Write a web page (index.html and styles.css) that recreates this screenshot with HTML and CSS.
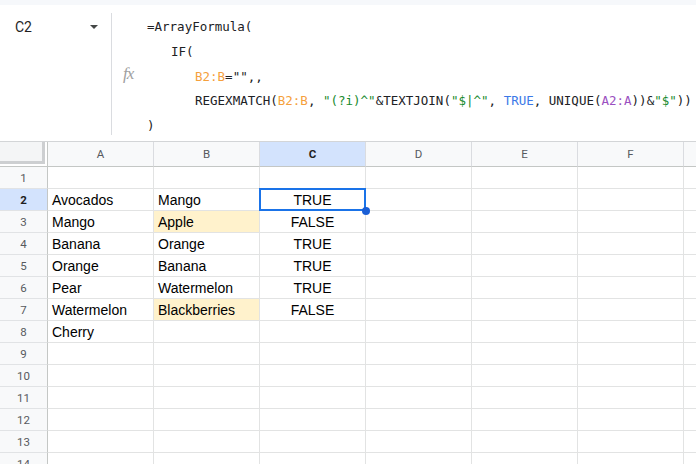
FILE: index.html
```html
<!DOCTYPE html>
<html>
<head>
<meta charset="utf-8">
<link rel="stylesheet" href="styles.css">
</head>
<body>
<div class="top"></div>
<div class="fbar">
  <div class="namebox"><span class="ref">C2</span><span class="caret"></span></div>
  <div class="sep"></div>
  <div class="fx">fx</div>
  <div class="formula">
    <div class="ln">=ArrayFormula(</div>
    <div class="ln i1">IF(</div>
    <div class="ln i2"><span class="rng">B2:B</span>="",,</div>
    <div class="ln i2">REGEXMATCH(<span class="rng">B2:B</span>, <span class="str">"(?i)^"</span>&amp;TEXTJOIN(<span class="str">"$|^"</span>, <span class="bool">TRUE</span>, UNIQUE(<span class="rng2">A2:A</span>))&amp;<span class="str">"$"</span>))</div>
    <div class="ln">)</div>
  </div>
</div>
<div class="grid">
  <div class="corner"><div class="cornerin"></div></div>
  <div class="ch">A</div><div class="ch">B</div><div class="ch sel">C</div><div class="ch">D</div><div class="ch">E</div><div class="ch">F</div><div class="ch"></div>

  <div class="rh">1</div><div class="c"></div><div class="c"></div><div class="c"></div><div class="c"></div><div class="c"></div><div class="c"></div><div class="c"></div>

  <div class="rh sel">2</div><div class="c">Avocados</div><div class="c">Mango</div><div class="c ctr active">TRUE<span class="selbox"></span><span class="handle"></span></div><div class="c"></div><div class="c"></div><div class="c"></div><div class="c"></div>

  <div class="rh">3</div><div class="c">Mango</div><div class="c hl">Apple</div><div class="c ctr">FALSE</div><div class="c"></div><div class="c"></div><div class="c"></div><div class="c"></div>

  <div class="rh">4</div><div class="c">Banana</div><div class="c">Orange</div><div class="c ctr">TRUE</div><div class="c"></div><div class="c"></div><div class="c"></div><div class="c"></div>

  <div class="rh">5</div><div class="c">Orange</div><div class="c">Banana</div><div class="c ctr">TRUE</div><div class="c"></div><div class="c"></div><div class="c"></div><div class="c"></div>

  <div class="rh">6</div><div class="c">Pear</div><div class="c">Watermelon</div><div class="c ctr">TRUE</div><div class="c"></div><div class="c"></div><div class="c"></div><div class="c"></div>

  <div class="rh">7</div><div class="c">Watermelon</div><div class="c hl">Blackberries</div><div class="c ctr">FALSE</div><div class="c"></div><div class="c"></div><div class="c"></div><div class="c"></div>

  <div class="rh">8</div><div class="c">Cherry</div><div class="c"></div><div class="c"></div><div class="c"></div><div class="c"></div><div class="c"></div><div class="c"></div>

  <div class="rh">9</div><div class="c"></div><div class="c"></div><div class="c"></div><div class="c"></div><div class="c"></div><div class="c"></div><div class="c"></div>

  <div class="rh">10</div><div class="c"></div><div class="c"></div><div class="c"></div><div class="c"></div><div class="c"></div><div class="c"></div><div class="c"></div>

  <div class="rh">11</div><div class="c"></div><div class="c"></div><div class="c"></div><div class="c"></div><div class="c"></div><div class="c"></div><div class="c"></div>

  <div class="rh">12</div><div class="c"></div><div class="c"></div><div class="c"></div><div class="c"></div><div class="c"></div><div class="c"></div><div class="c"></div>

  <div class="rh">13</div><div class="c"></div><div class="c"></div><div class="c"></div><div class="c"></div><div class="c"></div><div class="c"></div><div class="c"></div>

  <div class="rh">14</div><div class="c"></div><div class="c"></div><div class="c"></div><div class="c"></div><div class="c"></div><div class="c"></div><div class="c"></div>
</div>
</body>
</html>
```

FILE: styles.css
```css
* { box-sizing: border-box; }
html, body {
  margin: 0;
  padding: 0;
  width: 696px;
  height: 464px;
  overflow: hidden;
  background: #fff;
  font-family: "Liberation Sans", Arial, sans-serif;
  color: #000;
}
.top {
  height: 5px;
  background: #f6f8fb;
}
.fbar {
  display: flex;
  height: 136px;
  background: #fff;
}
.namebox {
  width: 111px;
  flex: none;
  display: flex;
  align-items: flex-start;
  justify-content: space-between;
  padding: 14px 13px 0 15px;
}
.ref {
  font-family: Roboto, "Liberation Sans", sans-serif;
  font-size: 14px;
  color: #1f1f1f;
  line-height: 16px;
}
.caret {
  width: 0;
  height: 0;
  margin-top: 6px;
  border-left: 4px solid transparent;
  border-right: 4px solid transparent;
  border-top: 4px solid #444746;
}
.sep {
  width: 1px;
  flex: none;
  margin: 8px 0 6px 0;
  background: #dadce0;
}
.fx {
  width: 35px;
  flex: none;
  padding: 59px 0 0 11px;
  font-family: "Liberation Serif", "DejaVu Serif", serif;
  font-style: italic;
  font-size: 17px;
  color: #a0a0a0;
  line-height: 20px;
  letter-spacing: -1px;
}
.formula {
  flex: 1;
  min-width: 0;
  padding-top: 10px;
  font-family: "DejaVu Sans Mono", "Liberation Mono", monospace;
  font-size: 12.5px;
  color: #202124;
}
.ln { line-height: 24.75px; height: 24.75px; white-space: pre; }
.i1 { padding-left: 24px; }
.i2 { padding-left: 48px; }
.rng { color: #f5a03c; }
.str { color: #188a2e; }
.bool { color: #3b78e7; }
.rng2 { color: #9a4fc0; }

.grid {
  display: grid;
  grid-template-columns: 48px repeat(7, 106px);
  grid-template-rows: 25px repeat(14, 22px);
  border-top: 1px solid #d3d5d7;
}
.corner {
  background: #fff;
  border-right: 1px solid #c4c7c5;
  border-bottom: 1px solid #c4c7c5;
  padding: 0 2px 2px 0;
}
.cornerin {
  width: 100%;
  height: 100%;
  background: #f4f5f6;
  border-right: 3px solid #cdcfd1;
  border-bottom: 3px solid #cdcfd1;
}
.ch {
  background: #f8f9fa;
  border-right: 1px solid #dadce0;
  border-bottom: 1px solid #c4c7c5;
  display: flex;
  align-items: center;
  justify-content: center;
  font-family: Roboto, "Liberation Sans", sans-serif;
  font-size: 11.5px;
  color: #575a5e;
}
.ch.sel {
  background: #d3e3fd;
  color: #1f1f1f;
  font-weight: bold;
}
.rh {
  background: #f8f9fa;
  border-right: 1px solid #c4c7c5;
  border-bottom: 1px solid #e1e3e5;
  display: flex;
  align-items: center;
  justify-content: center;
  font-family: Roboto, "Liberation Sans", sans-serif;
  font-size: 11.5px;
  color: #575a5e;
}
.rh.sel {
  background: #d3e3fd;
  color: #1f1f1f;
  font-weight: bold;
}
.c {
  border-right: 1px solid #e2e3e3;
  border-bottom: 1px solid #e2e3e3;
  font-size: 14px;
  line-height: 20px;
  padding: 1px 4px 0 4px;
  white-space: nowrap;
  position: relative;
}
.ctr { text-align: center; }
.hl { background: #fff2cc; }
.selbox {
  position: absolute;
  left: -1px;
  top: -1px;
  right: -1px;
  bottom: -1px;
  border: 2px solid #1a73e8;
}
.handle {
  position: absolute;
  right: -5px;
  bottom: -5px;
  width: 8px;
  height: 8px;
  border-radius: 50%;
  background: #1a5fd6;
  z-index: 2;
}
```
